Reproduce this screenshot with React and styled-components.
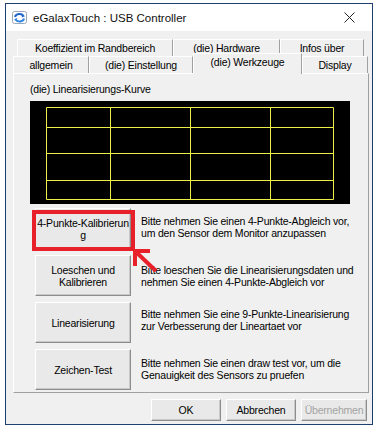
import React from "react";
import styled, { createGlobalStyle } from "styled-components";

const GlobalStyle = createGlobalStyle`
  html, body {
    margin: 0;
    padding: 0;
    background: #fff;
  }
  body {
    font-family: "Liberation Sans", Arial, sans-serif;
    font-size: 10.5px;
    letter-spacing: -0.2px;
    color: #000;
  }
`;

const Window = styled.div`
  margin: 3px 0 0 5px;
  width: 368px;
  height: 422px;
  box-sizing: border-box;
  border: 1px solid #1d3f6e;
  background: #f0f0f0;
  display: flex;
  flex-direction: column;
`;

const TitleBar = styled.div`
  height: 27px;
  background: #fff;
  display: flex;
  align-items: center;
  padding-left: 6px;
  gap: 6px;
`;

const Title = styled.div`
  flex: 1;
  font-size: 11.5px;
  letter-spacing: 0;
  color: #111;
`;

const CloseBox = styled.div`
  width: 46px;
  height: 27px;
  display: flex;
  align-items: center;
  justify-content: center;
`;

const Body = styled.div`
  flex: 1;
  display: flex;
  flex-direction: column;
  padding: 8px 3px 0 7px;
`;

const TabRow = styled.div`
  display: flex;
  height: 17px;
  padding-left: ${({ indent }) => indent || 0}px;
  align-items: flex-end;
`;

const Tab = styled.div`
  box-sizing: border-box;
  width: ${({ w }) => w}px;
  height: ${({ active }) => (active ? 21 : 17)}px;
  margin-bottom: ${({ active }) => (active ? -1 : 0)}px;
  padding-bottom: ${({ active }) => (active ? 4 : 0)}px;
  display: flex;
  align-items: center;
  justify-content: center;
  border-top: 1px solid #fff;
  border-left: 1px solid #fff;
  border-right: 1px solid #a0a0a0;
  background: #f0f0f0;
  position: relative;
  z-index: ${({ active }) => (active ? 2 : 0)};
  white-space: nowrap;
`;

const Panel = styled.div`
  box-sizing: border-box;
  height: 320px;
  border-top: 1px solid #fff;
  border-left: 1px solid #fff;
  border-right: 1px solid #a0a0a0;
  border-bottom: 1px solid #a0a0a0;
  padding: 9px 0 0 16px;
  display: flex;
  flex-direction: column;
`;

const Label = styled.div`
  height: 13px;
  line-height: 13px;
`;

const Curve = styled.svg`
  display: block;
  margin-top: 5px;
  width: 320px;
  height: 103px;
  background: #000;
`;

const Tools = styled.div`
  margin-top: 4px;
  display: flex;
  flex-direction: column;
  gap: 6px;
`;

const ToolRow = styled.div`
  position: relative;
  display: flex;
  align-items: center;
  height: 41px;
  padding-left: 5px;
  gap: 10px;
`;

const Button = styled.div`
  box-sizing: border-box;
  flex: none;
  width: ${({ w }) => w || 96}px;
  height: ${({ h }) => h || 41}px;
  display: flex;
  align-items: center;
  justify-content: center;
  text-align: center;
  line-height: 12px;
  white-space: nowrap;
  background: #e9e9e9;
  border-top: 1px solid #fff;
  border-left: 1px solid #fff;
  border-right: 1px solid #8d8d8d;
  border-bottom: 1px solid #8d8d8d;
  box-shadow: inset -1px -1px 0 #c9c9c9;
  color: ${({ disabled }) => (disabled ? "#a3a3a3" : "#000")};
`;

const Description = styled.div`
  line-height: 12px;
  white-space: nowrap;
  margin-top: ${({ shift }) => shift || 0}px;
`;

const Highlight = styled.div`
  position: absolute;
  left: 2px;
  top: 2px;
  width: 103px;
  height: 41px;
  box-sizing: border-box;
  border: 4px solid #e8202a;
  pointer-events: none;
`;

const Arrow = styled.svg`
  position: absolute;
  left: 98px;
  top: 30px;
  width: 34px;
  height: 34px;
  z-index: 3;
`;

const Footer = styled.div`
  display: flex;
  justify-content: flex-end;
  gap: 5px;
  margin-top: 6px;
  padding-right: 2px;
`;

const AppIcon = () => (
  <svg width="15" height="15" viewBox="0 0 15 15">
    <rect x="0.5" y="1.5" width="14" height="12" rx="2" fill="#fff" stroke="#9aa7b8" />
    <path d="M3 7 A4.5 3.5 0 0 1 11.5 6" fill="none" stroke="#1f66c9" strokeWidth="2" />
    <path d="M10 4 L13 6.2 L9.8 7.6 Z" fill="#1f66c9" />
    <path d="M12 8.5 A4.5 3.5 0 0 1 3.5 9.5" fill="none" stroke="#2e86e0" strokeWidth="2" />
    <path d="M5 11.5 L2 9.3 L5.2 7.9 Z" fill="#2e86e0" />
  </svg>
);

const CloseIcon = () => (
  <svg width="11" height="11" viewBox="0 0 11 11">
    <path d="M0.5 0.5 L10.5 10.5 M10.5 0.5 L0.5 10.5" stroke="#222" strokeWidth="1" />
  </svg>
);

const tools = [
  {
    label: ["4-Punkte-Kalibrierun", "g"],
    text: ["Bitte nehmen Sie einen 4-Punkte-Abgleich vor,", "um den Sensor dem Monitor anzupassen"],
    shift: -3,
    marked: true,
  },
  {
    label: ["Loeschen und", "Kalibrieren"],
    text: ["Bitte loeschen Sie die Linearisierungsdaten und", "nehmen Sie einen 4-Punkte-Abgleich vor"],
  },
  {
    label: ["Linearisierung"],
    text: ["Bitte nehmen Sie eine 9-Punkte-Linearisierung", "zur Verbesserung der Lineartaet vor"],
    shift: -6,
  },
  {
    label: ["Zeichen-Test"],
    text: ["Bitte nehmen Sie einen draw test vor, um die", "Genauigkeit des Sensors zu pruefen"],
    shift: -2,
  },
];

const gridX = [16.5, 80.5, 160.5, 240.5, 303.5];
const gridY = [6.5, 26.5, 52.5, 79.5, 98.5];

export default function App() {
  return (
    <>
      <GlobalStyle />
      <Window>
        <TitleBar>
          <AppIcon />
          <Title>eGalaxTouch : USB Controller</Title>
          <CloseBox>
            <CloseIcon />
          </CloseBox>
        </TitleBar>
        <Body>
          <TabRow indent={4}>
            <Tab w={156}>Koeffizient im Randbereich</Tab>
            <Tab w={107}>(die) Hardware</Tab>
            <Tab w={84}>Infos über</Tab>
          </TabRow>
          <TabRow>
            <Tab w={76}>allgemein</Tab>
            <Tab w={104}>(die) Einstellung</Tab>
            <Tab w={109} active>
              (die) Werkzeuge
            </Tab>
            <Tab w={66}>Display</Tab>
          </TabRow>
          <Panel>
            <Label>(die) Linearisierungs-Kurve</Label>
            <Curve viewBox="0 0 320 103">
              <g stroke="#eeee44" strokeWidth="1" fill="none">
                {gridX.map((x) => (
                  <line key={"x" + x} x1={x} y1={gridY[0]} x2={x} y2={gridY[4]} />
                ))}
                {gridY.map((y) => (
                  <line key={"y" + y} x1={gridX[0]} y1={y} x2={gridX[4]} y2={y} />
                ))}
              </g>
            </Curve>
            <Tools>
              {tools.map((t, i) => (
                <ToolRow key={i}>
                  <Button>
                    <div>
                      {t.label.map((l) => (
                        <div key={l}>{l}</div>
                      ))}
                    </div>
                  </Button>
                  <Description shift={t.shift}>
                    {t.text.map((l) => (
                      <div key={l}>{l}</div>
                    ))}
                  </Description>
                  {t.marked && (
                    <>
                      <Highlight />
                      <Arrow viewBox="0 0 34 34">
                        <g stroke="#e8202a" strokeWidth="4" fill="none" strokeLinejoin="miter">
                          <path d="M7 28 L7 13 L22 13" />
                          <path d="M8 14 L28 33" />
                        </g>
                      </Arrow>
                    </>
                  )}
                </ToolRow>
              ))}
            </Tools>
          </Panel>
          <Footer>
            <Button w={70} h={22}>OK</Button>
            <Button w={70} h={22}>Abbrechen</Button>
            <Button w={66} h={22} disabled>
              Übernehmen
            </Button>
          </Footer>
        </Body>
      </Window>
    </>
  );
}
